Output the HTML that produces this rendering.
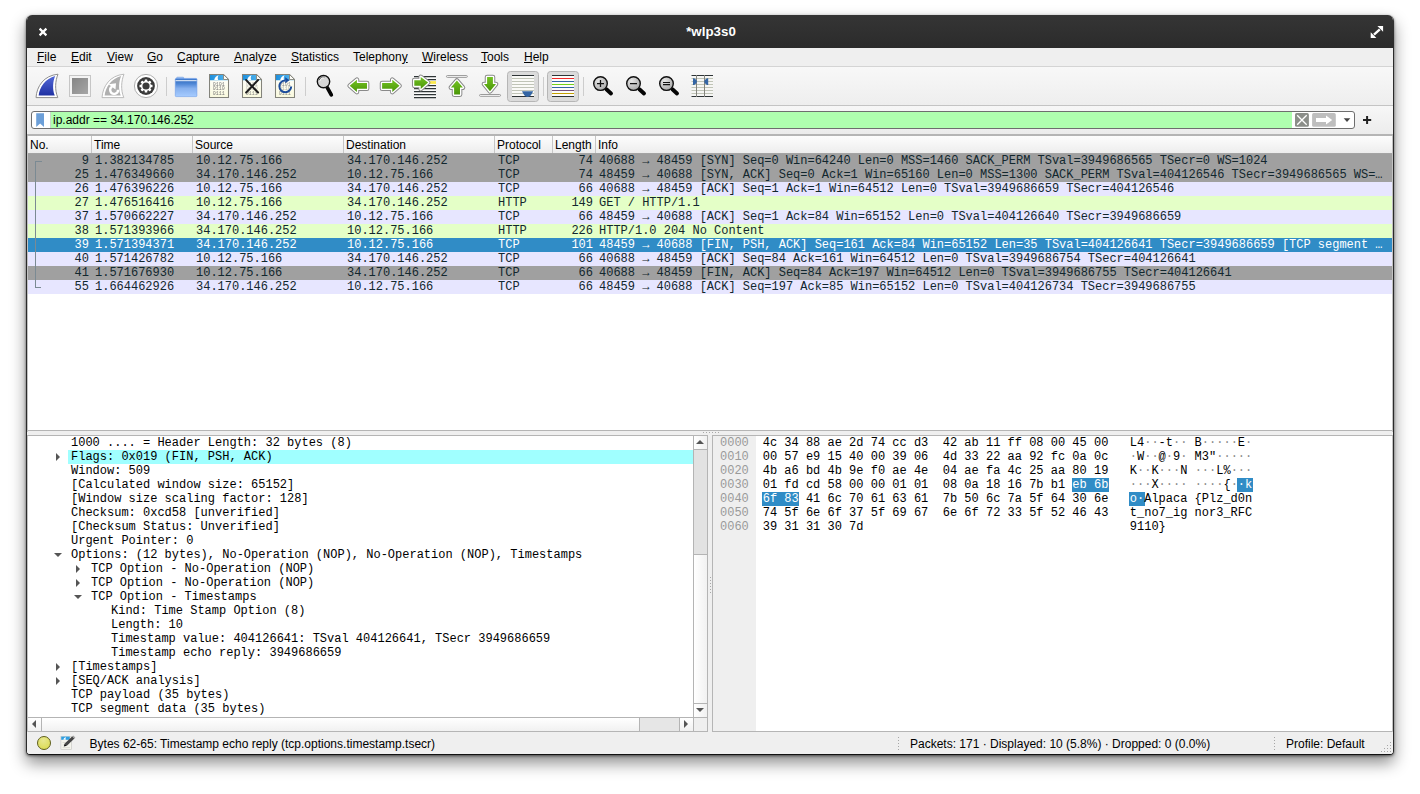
<!DOCTYPE html>
<html lang="en">
<head>
<meta charset="utf-8">
<title>*wlp3s0</title>
<style>
html,body{margin:0;padding:0;background:#fff;}
body{width:1420px;height:794px;overflow:hidden;position:relative;font-family:"Liberation Sans",sans-serif;font-size:12px;color:#000;}
.abs{position:absolute;}
#win{position:absolute;left:26px;top:15px;width:1368px;height:740px;background:linear-gradient(#353535 0,#2b2b2b 33px,#2a2a2a 33px,#2a2a2a 738px,#111 739px);border-radius:6px 6px 4px 4px;box-shadow:0 8px 16px rgba(0,0,0,.45),0 1px 3px rgba(0,0,0,.55);}
#inner{position:absolute;left:1px;top:0;width:1366px;height:739px;background:#efefef;border-radius:5px 5px 3px 3px;overflow:hidden;}
#title{position:absolute;left:0;top:0;width:1366px;height:33px;background:linear-gradient(#353535,#2b2b2b);border-radius:5px 5px 0 0;}
#title .t{position:absolute;left:1px;width:1366px;top:9px;text-align:center;color:#fff;font-weight:bold;font-size:13.33px;line-height:16px;}
#menu{position:absolute;left:0;top:33px;width:1366px;height:18px;background:#efefef;border-bottom:1px solid #d4d4d4;}
#menu span{position:absolute;top:2px;line-height:14px;font-size:12px;color:#000;white-space:nowrap;}
#menu u{text-decoration:underline;text-underline-offset:1px;}
#tb{position:absolute;left:0;top:52px;width:1366px;height:38px;background:linear-gradient(#f8f8f8,#eeeeee);border-bottom:1px solid #c4c4c4;}
#fbar{position:absolute;left:0;top:91px;width:1366px;height:28px;background:linear-gradient(#f7f7f7,#ececec);}
.mono{font-family:"Liberation Mono",monospace;font-size:12px;}
/* packet list */
#plist{position:absolute;left:0;top:119px;width:1366px;height:297px;background:#fff;border-top:2px solid #b5b5b5;border-bottom:1px solid #b5b5b5;box-sizing:border-box;}
#phead{position:absolute;left:0;top:0;width:1366px;height:17px;background:linear-gradient(#fdfdfd,#ededed);border-bottom:1px solid #a4a4a4;}
#phead span{position:absolute;top:2px;line-height:15px;font-size:12px;white-space:nowrap;}
#phead i{position:absolute;top:0;width:1px;height:17px;background:#c6c6c6;}
.pr{letter-spacing:-0.013px;position:absolute;left:0;width:1366px;height:14px;line-height:14px;white-space:pre;color:#12272e;font-family:"Liberation Mono",monospace;font-size:12px;}
.pr span{position:absolute;top:0;}
.g{background:#a0a0a0;}
.l{background:#e7e6ff;}
.h{background:#e4ffc7;}
.s{background:#308cc6;color:#fff;}
.pr .n1{left:0;width:62px;text-align:right;}
.pr .n2{left:526px;width:40px;text-align:right;}
.ar{font-weight:normal;}
.brk{position:absolute;background:#7b8a93;}
/* details */
#det{position:absolute;left:0;top:420px;width:681px;height:297px;background:#fff;border-top:1px solid #b5b5b5;border-bottom:1px solid #b5b5b5;box-sizing:border-box;overflow:hidden;}
.dr{position:absolute;height:14px;line-height:14px;white-space:pre;font-family:"Liberation Mono",monospace;font-size:12px;color:#000;}
.tr{position:absolute;width:0;height:0;border-left:4px solid #555;border-top:4px solid transparent;border-bottom:4px solid transparent;}
.tl{position:absolute;width:0;height:0;border-right:4px solid #555;border-top:4px solid transparent;border-bottom:4px solid transparent;}
.td{position:absolute;width:0;height:0;border-top:4px solid #555;border-left:4px solid transparent;border-right:4px solid transparent;}
.tu{position:absolute;width:0;height:0;border-bottom:4px solid #555;border-left:4px solid transparent;border-right:4px solid transparent;}
.hr{position:absolute;height:14px;line-height:14px;white-space:pre;font-family:"Liberation Mono",monospace;font-size:12px;color:#000;}
.hr i{font-style:normal;color:#8c8c8c;}
.hr b{font-weight:normal;background:#308cc6;color:#fff;display:inline-block;height:14px;margin:0 -.5px 0 -.5px;padding:0 .5px 0 .5px;}
/* hex */
#hex{position:absolute;left:685px;top:420px;width:681px;height:297px;background:#fff;border:1px solid #b5b5b5;border-right:none;box-sizing:border-box;overflow:hidden;}
#status{position:absolute;left:0;top:717px;width:1366px;height:22px;background:#efefef;}
#status span{position:absolute;top:5px;line-height:14px;white-space:nowrap;}
</style>
</head>
<body>
<div id="win"><div id="inner">
<div id="title"><div class="t">*wlp3s0</div><svg class="abs" style="left:0;top:0" width="1366" height="33" viewBox="27 15 1366 33">
<path d="M39.6,28.6L46.4,35.4M46.4,28.6L39.6,35.4" stroke="#fff" stroke-width="2.2"/>
<path d="M1377.4,26H1383.1V31.7ZM1370.7,32.3V38H1376.4Z" fill="#fff"/>
<path d="M1374,34.7L1379.8,29.3" stroke="#fff" stroke-width="2.3"/>
</svg></div>
<div id="menu">
<span style="left:10px"><u>F</u>ile</span>
<span style="left:44px"><u>E</u>dit</span>
<span style="left:80px"><u>V</u>iew</span>
<span style="left:120px"><u>G</u>o</span>
<span style="left:150px"><u>C</u>apture</span>
<span style="left:207px"><u>A</u>nalyze</span>
<span style="left:264px"><u>S</u>tatistics</span>
<span style="left:326px">Telephon<u>y</u></span>
<span style="left:395px"><u>W</u>ireless</span>
<span style="left:454px"><u>T</u>ools</span>
<span style="left:497px"><u>H</u>elp</span>
</div>
<div id="tb"></div>
<svg class="abs" style="left:0;top:51px" width="1366" height="40" viewBox="27 66 1366 40">
<defs>
<linearGradient id="gBlue" x1="0" y1="0" x2="0" y2="1"><stop offset="0" stop-color="#5268d8"/><stop offset="1" stop-color="#1f30a2"/></linearGradient>
<linearGradient id="gStop" x1="0" y1="0" x2="1" y2="1"><stop offset="0" stop-color="#868686"/><stop offset="1" stop-color="#a6a6a6"/></linearGradient>
<linearGradient id="gFold" x1="0" y1="0" x2="0" y2="1"><stop offset="0" stop-color="#4a84d6"/><stop offset=".13" stop-color="#3a74c4"/><stop offset=".3" stop-color="#4f87d6"/><stop offset=".55" stop-color="#86b0ee"/><stop offset="1" stop-color="#a6ccff"/></linearGradient>
<linearGradient id="gGreen" x1="0" y1="0" x2="0" y2="1"><stop offset="0" stop-color="#73c222"/><stop offset="1" stop-color="#4a9608"/></linearGradient>
<linearGradient id="gHdr" x1="0" y1="0" x2="1" y2="0"><stop offset="0" stop-color="#1f8fdc"/><stop offset="1" stop-color="#58baf2"/></linearGradient>
<linearGradient id="gPage" x1="0" y1="0" x2="0" y2="1"><stop offset="0" stop-color="#ffffff"/><stop offset="1" stop-color="#fafade"/></linearGradient>
<radialGradient id="gLens" cx=".35" cy=".3" r=".8"><stop offset="0" stop-color="#e6e6e6"/><stop offset="1" stop-color="#a4a4a4"/></radialGradient>
<filter id="nf" x="0" y="0" width="1" height="1"><feOffset dx="0" dy="0"/></filter>
<g id="fileico">
<path d="M.5,.5H14.5L19.5,5.5V23.5H.5Z" fill="url(#gPage)" stroke="#83837b" stroke-width="1.05"/>
<path d="M1,1H14.5V5.5H19V6.2H1Z" fill="url(#gHdr)"/>
<path d="M5.2,6C5.6,3.6 7.2,1.9 9.6,1.2C8.6,2.8 8.5,4.6 9.3,6Z" fill="#fff"/>
<path d="M14.5,.5V5.5H19.5Z" fill="#fbfbf6" stroke="#83837b" stroke-width=".9" stroke-linejoin="round"/>
</g>
<g id="lens">
<line x1="5.9" y1="5.7" x2="10.5" y2="9.9" stroke="#050505" stroke-width="3.9" stroke-linecap="round"/>
<circle cx="0" cy="0" r="6.8" fill="url(#gLens)" stroke="#111" stroke-width="1.4"/>
</g>
</defs>
<!-- separators -->
<g stroke="#cdcdcd" stroke-width="1"><path d="M166.5,77V96M305.5,77V96M543.5,77V96M583.5,77V96"/></g>
<!-- start capture (fin) -->
<path d="M36,97.6C36.8,86 44,75.5 58,74.2C55.2,81 54.6,90 57.8,97.6Z" fill="#fff" stroke="#8e8e8e" stroke-width="1" stroke-linejoin="round"/>
<path d="M38.65,95.6C39.6,87 45.5,78.5 55.2,76.05C52.9,81 52.2,89.5 54.8,95.6Z" fill="url(#gBlue)"/>
<!-- stop -->
<rect x="69.5" y="75.5" width="21" height="21" fill="#f4f4f4" stroke="#c6c6c6" stroke-width="1"/>
<rect x="72" y="78" width="16" height="16" fill="url(#gStop)"/>
<!-- restart (gray fin) -->
<path d="M102,97.6C102.8,86 110,75.5 124,74.2C121.2,81 120.6,90 123.8,97.6Z" fill="#fff" stroke="#b4b4b4" stroke-width=".9" stroke-linejoin="round"/>
<path d="M104.65,95.6C105.6,87 111.5,78.5 121.2,76.05C118.9,81 118.2,89.5 120.8,95.6Z" fill="#b0b0b0"/>
<path d="M118,89.8A3.9,3.9 0 1 1 112.2,86.6" fill="none" stroke="#fff" stroke-width="2.3"/>
<path d="M108.6,84.3L116,83.2L115.5,89.6Z" fill="#fff"/>
<!-- options gear -->
<circle cx="146" cy="86" r="11.6" fill="#fff" stroke="#a6a6a6" stroke-width=".9"/>
<circle cx="146" cy="86" r="8.9" fill="#3b3b3b"/>
<g fill="#fff" transform="translate(146 86)">
<circle r="5.1"/>
<g id="teeth"><rect x="-1.25" y="-6.5" width="2.5" height="13" rx=".3"/><rect x="-6.5" y="-1.25" width="13" height="2.5" rx=".3"/></g>
<use href="#teeth" transform="rotate(45)"/>
</g>
<circle cx="146" cy="86" r="3.6" fill="#3b3b3b"/>
<!-- open folder -->
<rect x="176.7" y="77.2" width="7" height="2.4" rx=".6" fill="#a4c2ee" stroke="#6f9fe4" stroke-width=".6"/>
<rect x="175.3" y="78.4" width="21.6" height="18.2" rx=".9" fill="url(#gFold)" stroke="#6b9cea" stroke-width=".6"/>
<rect x="175.6" y="80.2" width="21" height="1" fill="#fff" opacity=".92"/>
<!-- save / close / reload file icons -->
<g font-family="Liberation Mono, monospace" font-size="4.5" fill="#7a7a7a" filter="url(#nf)">
<use href="#fileico" x="209" y="74"/>
<text transform="translate(212.7 85.9) scale(1.12 1)" opacity="1">0101</text><text transform="translate(212.7 90.4) scale(1.12 1)" opacity="1">0110</text><text transform="translate(212.7 94.9) scale(1.12 1)" opacity="1">0111</text>
<use href="#fileico" x="242" y="74"/>
<text transform="translate(245.7 85.9) scale(1.12 1)" opacity="0.5">0101</text><text transform="translate(245.7 90.4) scale(1.12 1)" opacity="0.5">0110</text><text transform="translate(245.7 94.9) scale(1.12 1)" opacity="0.9">0111</text>
<use href="#fileico" x="275" y="74"/>
<text transform="translate(278.7 85.9) scale(1.12 1)" opacity="0.9">0101</text><text transform="translate(278.7 90.4) scale(1.12 1)" opacity="0.6">0110</text><text transform="translate(278.7 94.9) scale(1.12 1)" opacity="0.9">0111</text>
</g>
<path d="M246.2,80.1L258,92.5M258,80.1L246.2,92.5" stroke="#1d1d1d" stroke-width="2.1" stroke-linecap="round"/>
<path d="M291.2,86.4A5.9,5.9 0 1 1 285.3,80.4" fill="none" stroke="#1b4c9c" stroke-width="2"/>
<path d="M285.2,77.2L289.6,80.3L285.2,83.3Z" fill="#1b4c9c"/>
<!-- find -->
<line x1="327.3" y1="87.6" x2="331.3" y2="94.9" stroke="#050505" stroke-width="3.7" stroke-linecap="round"/>
<circle cx="323.5" cy="81.6" r="6.2" fill="#d5d5d5" stroke="#111" stroke-width="1.4"/>
<path d="M319.2,80.2A4.6,4.6 0 0 1 324.6,77.1" fill="none" stroke="#222" stroke-width=".8" opacity=".85"/><path d="M319.9,81.2A3.9,3.9 0 0 1 324.2,78" fill="none" stroke="#fff" stroke-width=".8" opacity=".9"/>
<!-- back / forward -->
<path d="M349.7,85.85L356.9,79.7V83.1H367V88.7H356.9V92.1Z" fill="none" stroke="#8a8a8a" stroke-width="4.7" stroke-linejoin="round"/><path d="M349.7,85.85L356.9,79.7V83.1H367V88.7H356.9V92.1Z" fill="none" stroke="#fff" stroke-width="2.7" stroke-linejoin="round"/><path d="M349.7,85.85L356.9,79.7V83.1H367V88.7H356.9V92.1Z" fill="url(#gGreen)"/>
<path d="M399.5,85.85L392.3,79.7V83.1H382.1V88.7H392.3V92.1Z" fill="none" stroke="#8a8a8a" stroke-width="4.7" stroke-linejoin="round"/><path d="M399.5,85.85L392.3,79.7V83.1H382.1V88.7H392.3V92.1Z" fill="none" stroke="#fff" stroke-width="2.7" stroke-linejoin="round"/><path d="M399.5,85.85L392.3,79.7V83.1H382.1V88.7H392.3V92.1Z" fill="url(#gGreen)"/>
<!-- go to packet -->
<rect x="414" y="76" width="22" height="22" fill="#fbfbfb"/>
<g stroke="#2e3436" stroke-width="1.25"><path d="M414,76.6H436M414,79.5H436M414,85.5H436M414,88.5H436M414,91.5H436M414,94.5H436M414,97.5H436"/></g>
<rect x="427" y="81.1" width="9" height="2.8" fill="#fce94f"/>
<path d="M428.1,82.6L420.7,76.9V80.2H414.3V85.8H420.7V89.1Z" fill="none" stroke="#8a8a8a" stroke-width="4.7" stroke-linejoin="round"/><path d="M428.1,82.6L420.7,76.9V80.2H414.3V85.8H420.7V89.1Z" fill="none" stroke="#fff" stroke-width="2.7" stroke-linejoin="round"/><path d="M428.1,82.6L420.7,76.9V80.2H414.3V85.8H420.7V89.1Z" fill="url(#gGreen)"/>
<!-- go first -->
<rect x="446.45" y="75.55" width="20.9" height="1.8" rx=".9" fill="#fff" stroke="#8f8f8f" stroke-width=".9"/>
<path d="M456.9,80.6L462.9,87.6H460V94.6H454.1V87.6H450.9Z" fill="none" stroke="#8a8a8a" stroke-width="4.7" stroke-linejoin="round"/><path d="M456.9,80.6L462.9,87.6H460V94.6H454.1V87.6H450.9Z" fill="none" stroke="#fff" stroke-width="2.7" stroke-linejoin="round"/><path d="M456.9,80.6L462.9,87.6H460V94.6H454.1V87.6H450.9Z" fill="url(#gGreen)"/>
<!-- go last -->
<path d="M490,91.3L496,84H492.9V77H487.1V84H484Z" fill="none" stroke="#8a8a8a" stroke-width="4.7" stroke-linejoin="round"/><path d="M490,91.3L496,84H492.9V77H487.1V84H484Z" fill="none" stroke="#fff" stroke-width="2.7" stroke-linejoin="round"/><path d="M490,91.3L496,84H492.9V77H487.1V84H484Z" fill="url(#gGreen)"/>
<rect x="479.55" y="94.5" width="21" height="1.8" rx=".9" fill="#fff" stroke="#8f8f8f" stroke-width=".9"/>
<!-- autoscroll (checked) -->
<rect x="507.5" y="71.5" width="31" height="30" rx="3" fill="#dbdbdb" stroke="#b6b6b6" stroke-width="1"/>
<rect x="512" y="75" width="22" height="22" fill="#fafaf7"/>
<g stroke="#c0c4b7" stroke-width="1"><path d="M512,78.5H534M512,81.5H534M512,84.5H534M512,87.5H534M512,90.5H534M512,93.5H534"/></g>
<g stroke="#2e3436" stroke-width="1.15"><path d="M512,75.5H534M512,96.5H534"/></g>
<path d="M522,91.2H533.2C532,94 530,96.9 527.6,96.9C525.2,96.9 523.2,94 522,91.2Z" fill="#3465a4"/>
<!-- colorize (checked) -->
<rect x="547.5" y="71.5" width="31" height="30" rx="3" fill="#dbdbdb" stroke="#b6b6b6" stroke-width="1"/>
<rect x="552" y="75" width="22" height="22" fill="#fcfcfa"/>
<g stroke-width="1.15">
<path d="M552,75.5H574" stroke="#2e3436"/><path d="M552,78.5H574" stroke="#ef2929"/><path d="M552,81.5H574" stroke="#3465a4"/><path d="M552,84.5H574" stroke="#73d216"/><path d="M552,87.5H574" stroke="#3465a4"/><path d="M552,90.5H574" stroke="#75507b"/><path d="M552,93.5H574" stroke="#c4a000"/><path d="M552,96.5H574" stroke="#2e3436"/>
</g>
<!-- zoom in/out/100 -->
<use href="#lens" x="600.5" y="83.6"/><path d="M597,83.6H604M600.5,80.1V87.1" stroke="#111" stroke-width="1.3"/>
<use href="#lens" x="633.5" y="83.6"/><path d="M630,83.6H637" stroke="#111" stroke-width="1.3"/>
<use href="#lens" x="666.5" y="83.6"/><path d="M663,82.5H670M663,84.6H670" stroke="#111" stroke-width="1.05"/>
<!-- resize columns -->
<rect x="691.5" y="75" width="21.5" height="22" fill="#f6f6f4"/>
<g stroke="#c0c4b7" stroke-width="1"><path d="M691.5,78.5H713M691.5,81.5H713M691.5,84.5H713M691.5,87.5H713M691.5,90.5H713M691.5,93.5H713"/></g>
<g stroke="#2e3436" stroke-width="1.15"><path d="M691.5,75.5H713M691.5,96.5H713"/></g>
<g stroke="#84847e" stroke-width="1"><path d="M696.5,75V97M704.5,75V97"/></g>
<path d="M693,78.3H694.2Q697.1,80 697,81.6Q697.1,83.2 694.2,84.9H693Z" fill="#3465a4"/>
<path d="M708.2,78.3H707Q704.1,80 704.2,81.6Q704.1,83.2 707,84.9H708.2Z" fill="#3465a4"/>
</svg>

<div id="fbar">
<div class="abs" style="left:4px;top:5px;width:1324px;height:18px;box-sizing:border-box;border:1px solid #6e6e6e;border-radius:3px;background:#fff;overflow:hidden">
<div class="abs" style="left:18px;top:0;width:1242px;height:16px;background:#afffaf;border-left:1px solid #c9d9c9;box-sizing:border-box"></div>
<div class="abs" style="left:21px;top:1px;line-height:14px;font-size:12px;white-space:nowrap">ip.addr == 34.170.146.252</div>
</div>
<svg class="abs" style="left:0;top:0" width="1366" height="28" viewBox="27 106 1366 28">
<path d="M36.2,113.2H44V126.9L40.1,123.6L36.2,126.9Z" fill="#6c9fd8"/>
<rect x="1295" y="113.1" width="13.9" height="13.7" rx="1.6" fill="#8b8e89"/>
<path d="M1297.2,115.2L1306.7,124.7M1306.7,115.2L1297.2,124.7" stroke="#fff" stroke-width="1.3"/>
<rect x="1312.1" y="113.1" width="23.7" height="13.7" rx="1.6" fill="#bebebe"/>
<path d="M1316,118.1H1326V115.6L1332.2,120L1326,124.4V121.9H1316Z" fill="#fff"/>
<path d="M1343.7,118.2H1350.3L1347,121.9Z" fill="#444"/>
<path d="M1363,120H1371.2M1367.1,115.9V124.1" stroke="#222" stroke-width="2"/>
</svg>
</div>
<div id="plist">
<div id="phead">
<span style="left:3px">No.</span>
<span style="left:67px">Time</span>
<span style="left:168px">Source</span>
<span style="left:319px">Destination</span>
<span style="left:470px">Protocol</span>
<span style="left:528px">Length</span>
<span style="left:571px">Info</span>
<i style="left:64px"></i>
<i style="left:165px"></i>
<i style="left:316px"></i>
<i style="left:467px"></i>
<i style="left:525px"></i>
<i style="left:568px"></i>
</div>
<div class="pr g" style="top:18px"><span class="n1">9</span><span style="left:68px">1.382134785</span><span style="left:169px">10.12.75.166</span><span style="left:320px">34.170.146.252</span><span style="left:471px">TCP</span><span class="n2">74</span><span style="left:572px">40688 <b class="ar">→</b> 48459 [SYN] Seq=0 Win=64240 Len=0 MSS=1460 SACK_PERM TSval=3949686565 TSecr=0 WS=1024</span></div>
<div class="pr g" style="top:32px"><span class="n1">25</span><span style="left:68px">1.476349660</span><span style="left:169px">34.170.146.252</span><span style="left:320px">10.12.75.166</span><span style="left:471px">TCP</span><span class="n2">74</span><span style="left:572px">48459 <b class="ar">→</b> 40688 [SYN, ACK] Seq=0 Ack=1 Win=65160 Len=0 MSS=1300 SACK_PERM TSval=404126546 TSecr=3949686565 WS=…</span></div>
<div class="pr l" style="top:46px"><span class="n1">26</span><span style="left:68px">1.476396226</span><span style="left:169px">10.12.75.166</span><span style="left:320px">34.170.146.252</span><span style="left:471px">TCP</span><span class="n2">66</span><span style="left:572px">40688 <b class="ar">→</b> 48459 [ACK] Seq=1 Ack=1 Win=64512 Len=0 TSval=3949686659 TSecr=404126546</span></div>
<div class="pr h" style="top:60px"><span class="n1">27</span><span style="left:68px">1.476516416</span><span style="left:169px">10.12.75.166</span><span style="left:320px">34.170.146.252</span><span style="left:471px">HTTP</span><span class="n2">149</span><span style="left:572px">GET / HTTP/1.1</span></div>
<div class="pr l" style="top:74px"><span class="n1">37</span><span style="left:68px">1.570662227</span><span style="left:169px">34.170.146.252</span><span style="left:320px">10.12.75.166</span><span style="left:471px">TCP</span><span class="n2">66</span><span style="left:572px">48459 <b class="ar">→</b> 40688 [ACK] Seq=1 Ack=84 Win=65152 Len=0 TSval=404126640 TSecr=3949686659</span></div>
<div class="pr h" style="top:88px"><span class="n1">38</span><span style="left:68px">1.571393966</span><span style="left:169px">34.170.146.252</span><span style="left:320px">10.12.75.166</span><span style="left:471px">HTTP</span><span class="n2">226</span><span style="left:572px">HTTP/1.0 204 No Content</span></div>
<div class="pr s" style="top:102px"><span class="n1">39</span><span style="left:68px">1.571394371</span><span style="left:169px">34.170.146.252</span><span style="left:320px">10.12.75.166</span><span style="left:471px">TCP</span><span class="n2">101</span><span style="left:572px">48459 <b class="ar">→</b> 40688 [FIN, PSH, ACK] Seq=161 Ack=84 Win=65152 Len=35 TSval=404126641 TSecr=3949686659 [TCP segment …</span></div>
<div class="pr l" style="top:116px"><span class="n1">40</span><span style="left:68px">1.571426782</span><span style="left:169px">10.12.75.166</span><span style="left:320px">34.170.146.252</span><span style="left:471px">TCP</span><span class="n2">66</span><span style="left:572px">40688 <b class="ar">→</b> 48459 [ACK] Seq=84 Ack=161 Win=64512 Len=0 TSval=3949686754 TSecr=404126641</span></div>
<div class="pr g" style="top:130px"><span class="n1">41</span><span style="left:68px">1.571676930</span><span style="left:169px">10.12.75.166</span><span style="left:320px">34.170.146.252</span><span style="left:471px">TCP</span><span class="n2">66</span><span style="left:572px">40688 <b class="ar">→</b> 48459 [FIN, ACK] Seq=84 Ack=197 Win=64512 Len=0 TSval=3949686755 TSecr=404126641</span></div>
<div class="pr l" style="top:144px"><span class="n1">55</span><span style="left:68px">1.664462926</span><span style="left:169px">34.170.146.252</span><span style="left:320px">10.12.75.166</span><span style="left:471px">TCP</span><span class="n2">66</span><span style="left:572px">48459 <b class="ar">→</b> 40688 [ACK] Seq=197 Ack=85 Win=65152 Len=0 TSval=404126734 TSecr=3949686755</span></div>
<div class="brk" style="left:8px;top:25px;width:7px;height:1px"></div>
<div class="brk" style="left:8px;top:25px;width:1px;height:126px"></div>
<div class="brk" style="left:8px;top:151px;width:6px;height:1px"></div>
</div>
<svg class="abs" style="left:0;top:416px" width="1366" height="301" viewBox="27 431 1366 301"><g fill="#a8a8a8"><rect x="703" y="432" width="1" height="1"/><rect x="706" y="432" width="1" height="1"/><rect x="709" y="432" width="1" height="1"/><rect x="712" y="432" width="1" height="1"/><rect x="715" y="432" width="1" height="1"/><rect x="718" y="432" width="1" height="1"/><rect x="710" y="577" width="1" height="1"/><rect x="710" y="580" width="1" height="1"/><rect x="710" y="583" width="1" height="1"/><rect x="710" y="586" width="1" height="1"/><rect x="710" y="589" width="1" height="1"/><rect x="710" y="592" width="1" height="1"/></g></svg>
<div id="det">
<div class="abs" style="left:41px;top:14px;width:625px;height:14px;background:#a0ffff"></div>
<div class="dr" style="left:44px;top:0px">1000 .... = Header Length: 32 bytes (8)</div>
<div class="dr" style="left:44px;top:14px">Flags: 0x019 (FIN, PSH, ACK)</div>
<div class="tr" style="left:29px;top:17px"></div>
<div class="dr" style="left:44px;top:28px">Window: 509</div>
<div class="dr" style="left:44px;top:42px">[Calculated window size: 65152]</div>
<div class="dr" style="left:44px;top:56px">[Window size scaling factor: 128]</div>
<div class="dr" style="left:44px;top:70px">Checksum: 0xcd58 [unverified]</div>
<div class="dr" style="left:44px;top:84px">[Checksum Status: Unverified]</div>
<div class="dr" style="left:44px;top:98px">Urgent Pointer: 0</div>
<div class="dr" style="left:44px;top:112px">Options: (12 bytes), No-Operation (NOP), No-Operation (NOP), Timestamps</div>
<div class="td" style="left:27px;top:117px"></div>
<div class="dr" style="left:64px;top:126px">TCP Option - No-Operation (NOP)</div>
<div class="tr" style="left:49px;top:129px"></div>
<div class="dr" style="left:64px;top:140px">TCP Option - No-Operation (NOP)</div>
<div class="tr" style="left:49px;top:143px"></div>
<div class="dr" style="left:64px;top:154px">TCP Option - Timestamps</div>
<div class="td" style="left:47px;top:159px"></div>
<div class="dr" style="left:84px;top:168px">Kind: Time Stamp Option (8)</div>
<div class="dr" style="left:84px;top:182px">Length: 10</div>
<div class="dr" style="left:84px;top:196px">Timestamp value: 404126641: TSval 404126641, TSecr 3949686659</div>
<div class="dr" style="left:84px;top:210px">Timestamp echo reply: 3949686659</div>
<div class="dr" style="left:44px;top:224px">[Timestamps]</div>
<div class="tr" style="left:29px;top:227px"></div>
<div class="dr" style="left:44px;top:238px">[SEQ/ACK analysis]</div>
<div class="tr" style="left:29px;top:241px"></div>
<div class="dr" style="left:44px;top:252px">TCP payload (35 bytes)</div>
<div class="dr" style="left:44px;top:266px">TCP segment data (35 bytes)</div>
<div class="abs" style="left:666px;top:0px;width:1px;height:282px;background:#b4b4b4"></div>
<div class="abs" style="left:680px;top:0px;width:1px;height:296px;background:#b4b4b4"></div>
<div class="abs" style="left:667px;top:0px;width:13px;height:13px;background:linear-gradient(90deg,#fff,#f1f1f1)"></div>
<div class="abs" style="left:667px;top:13px;width:13px;height:1px;background:#b4b4b4"></div>
<div class="abs" style="left:667px;top:14px;width:13px;height:104px;background:#e2e2e2"></div>
<div class="abs" style="left:667px;top:118px;width:13px;height:1px;background:#b4b4b4"></div>
<div class="abs" style="left:667px;top:119px;width:13px;height:148px;background:linear-gradient(90deg,#fff,#f1f1f1)"></div>
<div class="abs" style="left:667px;top:267px;width:13px;height:1px;background:#b4b4b4"></div>
<div class="abs" style="left:667px;top:268px;width:13px;height:13px;background:linear-gradient(90deg,#fff,#f1f1f1)"></div>
<div class="tu" style="left:669px;top:4px"></div>
<div class="td" style="left:669px;top:272px"></div>
<div class="abs" style="left:0px;top:281px;width:681px;height:1px;background:#b4b4b4"></div>
<div class="abs" style="left:0px;top:282px;width:14px;height:13px;background:linear-gradient(#fff,#f1f1f1)"></div>
<div class="abs" style="left:14px;top:282px;width:1px;height:13px;background:#b4b4b4"></div>
<div class="abs" style="left:15px;top:282px;width:597px;height:13px;background:linear-gradient(#fff,#f1f1f1)"></div>
<div class="abs" style="left:612px;top:282px;width:1px;height:13px;background:#b4b4b4"></div>
<div class="abs" style="left:613px;top:282px;width:39px;height:13px;background:#e6e6e6"></div>
<div class="abs" style="left:652px;top:282px;width:1px;height:13px;background:#b4b4b4"></div>
<div class="abs" style="left:653px;top:282px;width:13px;height:13px;background:linear-gradient(#fff,#f1f1f1)"></div>
<div class="abs" style="left:666px;top:282px;width:1px;height:13px;background:#b4b4b4"></div>
<div class="abs" style="left:667px;top:282px;width:13px;height:13px;background:#efefef"></div>
<div class="tl" style="left:5px;top:284px"></div>
<div class="tr" style="left:657px;top:284px"></div>
</div>
<div id="hex">
<div class="abs" style="left:0;top:0;width:43px;height:295px;background:#efefef"></div>
<div class="hr" style="left:7px;top:0px;color:#9a9a9a">0000</div>
<div class="hr" style="left:49.7px;top:0px">4c 34 88 ae 2d 74 cc d3  42 ab 11 ff 08 00 45 00</div>
<div class="hr" style="left:416.8px;top:0px">L4<i>··</i>-t<i>··</i> B<i>·····</i>E<i>·</i></div>
<div class="hr" style="left:7px;top:14px;color:#9a9a9a">0010</div>
<div class="hr" style="left:49.7px;top:14px">00 57 e9 15 40 00 39 06  4d 33 22 aa 92 fc 0a 0c</div>
<div class="hr" style="left:416.8px;top:14px"><i>·</i>W<i>··</i>@<i>·</i>9<i>·</i> M3&quot;<i>·····</i></div>
<div class="hr" style="left:7px;top:28px;color:#9a9a9a">0020</div>
<div class="hr" style="left:49.7px;top:28px">4b a6 bd 4b 9e f0 ae 4e  04 ae fa 4c 25 aa 80 19</div>
<div class="hr" style="left:416.8px;top:28px">K<i>··</i>K<i>···</i>N <i>···</i>L%<i>···</i></div>
<div class="hr" style="left:7px;top:42px;color:#9a9a9a">0030</div>
<div class="hr" style="left:49.7px;top:42px">01 fd cd 58 00 00 01 01  08 0a 18 16 7b b1 <b>eb 6b</b></div>
<div class="hr" style="left:416.8px;top:42px"><i>···</i>X<i>····</i> <i>····</i>{<i>·</i><b>·k</b></div>
<div class="hr" style="left:7px;top:56px;color:#9a9a9a">0040</div>
<div class="hr" style="left:49.7px;top:56px"><b>6f 83</b> 41 6c 70 61 63 61  7b 50 6c 7a 5f 64 30 6e</div>
<div class="hr" style="left:416.8px;top:56px"><b>o·</b>Alpaca {Plz_d0n</div>
<div class="hr" style="left:7px;top:70px;color:#9a9a9a">0050</div>
<div class="hr" style="left:49.7px;top:70px">74 5f 6e 6f 37 5f 69 67  6e 6f 72 33 5f 52 46 43</div>
<div class="hr" style="left:416.8px;top:70px">t_no7_ig nor3_RFC</div>
<div class="hr" style="left:7px;top:84px;color:#9a9a9a">0060</div>
<div class="hr" style="left:49.7px;top:84px">39 31 31 30 7d</div>
<div class="hr" style="left:416.8px;top:84px">9110}</div>
</div>
<div class="abs" style="left:0;top:121px;width:1px;height:296px;background:#c2c2c2"></div><div class="abs" style="left:1365px;top:121px;width:1px;height:296px;background:#c2c2c2"></div>
<div class="abs" style="left:0;top:421px;width:1px;height:296px;background:#c2c2c2"></div><div class="abs" style="left:1365px;top:421px;width:1px;height:296px;background:#c2c2c2"></div>
<div id="status">
<svg class="abs" style="left:0;top:0" width="1366" height="22" viewBox="27 732 1366 22">
<defs><radialGradient id="gYel" cx=".45" cy=".3" r=".75"><stop offset="0" stop-color="#e8e890"/><stop offset="1" stop-color="#dada50"/></radialGradient></defs>
<circle cx="44" cy="743" r="6.5" fill="url(#gYel)" stroke="#5e5e1e" stroke-width="1"/>
<rect x="60.9" y="736.4" width="10.6" height="13" fill="#f4f4ec" stroke="#c4c4c0" stroke-width=".6"/>
<rect x="61.2" y="736.6" width="8.6" height="3.2" fill="#2f9fe2"/>
<path d="M63.4,739.8C63.7,738.4 64.6,737.4 66,737C65.5,737.9 65.5,739 65.9,739.8Z" fill="#fff"/>
<g stroke="#d4d4cc" stroke-width=".7"><path d="M62.5,742.5H68M62.5,745H66M62.5,747.6H70"/></g>
<path d="M73.4,737.4L65.8,744.6" stroke="#454545" stroke-width="3"/>
<path d="M74.3,736.5L73.2,737.6" stroke="#a2a2a2" stroke-width="3"/>
<path d="M63.8,746.4L64.7,743.6L66.9,745.7Z" fill="#111"/>
<g fill="#a6a6a6">
<rect x="898" y="737" width="1" height="1"/><rect x="898" y="740" width="1" height="1"/><rect x="898" y="743" width="1" height="1"/><rect x="898" y="746" width="1" height="1"/><rect x="898" y="749" width="1" height="1"/>
<rect x="1274" y="737" width="1" height="1"/><rect x="1274" y="740" width="1" height="1"/><rect x="1274" y="743" width="1" height="1"/><rect x="1274" y="746" width="1" height="1"/><rect x="1274" y="749" width="1" height="1"/>
<rect x="1390" y="742" width="1" height="1"/>
<rect x="1387" y="745" width="1" height="1"/><rect x="1390" y="745" width="1" height="1"/>
<rect x="1384" y="748" width="1" height="1"/><rect x="1387" y="748" width="1" height="1"/><rect x="1390" y="748" width="1" height="1"/>
<rect x="1381" y="751" width="1" height="1"/><rect x="1384" y="751" width="1" height="1"/><rect x="1387" y="751" width="1" height="1"/><rect x="1390" y="751" width="1" height="1"/>
</g>
</svg>
<span style="left:62.6px">Bytes 62-65: Timestamp echo reply (tcp.options.timestamp.tsecr)</span>
<span style="left:883px">Packets: 171 · Displayed: 10 (5.8%) · Dropped: 0 (0.0%)</span>
<span style="left:1259px">Profile: Default</span>
</div>
</div></div>
</body>
</html>
